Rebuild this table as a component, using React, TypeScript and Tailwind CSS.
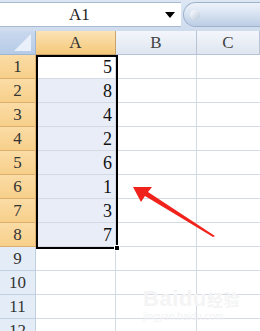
import React from "react";

const values = [5, 8, 4, 2, 6, 1, 3, 7];
const rows = Array.from({ length: 12 }, (_, i) => i + 1);

const serif = { fontFamily: '"Liberation Serif", "DejaVu Serif", serif' };

function ColHeader({ label, active }: { label: string; active?: boolean }) {
  return (
    <div
      className={`h-[24px] flex items-center justify-center border-r border-b text-[17px] ${
        active
          ? "bg-gradient-to-b from-[#fbe3b5] to-[#f5c878] border-[#c8a46a] text-[#333]"
          : "bg-gradient-to-b from-[#f3f6fb] to-[#dfe6f0] border-[#b8c4d6] text-[#444]"
      }`}
    >
      {label}
    </div>
  );
}

export default function App() {
  return (
    <div className="relative w-[260px] h-[331px] overflow-hidden bg-white" style={serif}>
      {/* name box + formula bar */}
      <div className="h-[31px] bg-gradient-to-b from-[#dde7f4] to-[#cfdcee] flex pt-[2px] pb-[4px]">
        <div className="w-[181px] bg-white border-y border-[#a9bbd3] flex items-center relative">
          <span className="absolute left-[69px] text-[17px] text-[#222]">A1</span>
          <span className="absolute left-[165px] top-[9px] w-0 h-0 border-l-[5px] border-r-[5px] border-t-[6px] border-l-transparent border-r-transparent border-t-black" />
        </div>
        <div className="flex-1 ml-[2px] rounded-l-full border border-r-0 border-[#9fb2cc] bg-gradient-to-b from-[#eef3fa] via-[#d6e2f1] to-[#bccde5] flex items-center pl-[6px]">
          <span className="w-[10px] h-[10px] rounded-full bg-gradient-to-br from-white to-[#b9c7da]" />
        </div>
      </div>

      {/* grid */}
      <div className="grid grid-cols-[36px_80px_81px_1fr]">
        <div className="h-[24px] border-r border-b border-[#9eb6d4] bg-gradient-to-b from-[#c9d9ee] to-[#b6cbe6] relative overflow-hidden">
          <svg className="absolute right-[4px] bottom-[3px]" width="17" height="17">
            <polygon points="17,0 17,17 0,17" fill="#e9f0f9" />
          </svg>
        </div>
        <ColHeader label="A" active />
        <ColHeader label="B" />
        <ColHeader label="C" />

        {rows.map((r) => {
          const sel = r <= 8;
          return (
            <React.Fragment key={r}>
              <div
                className={`h-[24px] flex items-center justify-center border-r border-b text-[17px] ${
                  sel
                    ? "bg-gradient-to-b from-[#fbdca5] to-[#f7cf8a] border-[#d9b070] text-[#333]"
                    : "bg-[#e4ecf7] border-[#c2cfe0] text-[#333]"
                }`}
              >
                {r}
              </div>
              <div
                className={`h-[24px] flex items-center justify-end pr-[3px] pt-[1px] border-r border-b border-[#d4dae4] text-[18px] text-[#111] ${
                  sel && r > 1 ? "bg-[#e9edf7]" : "bg-white"
                }`}
              >
                {sel ? values[r - 1] : ""}
              </div>
              <div className="h-[24px] border-r border-b border-[#d4dae4]" />
              <div className="h-[24px] border-b border-[#d4dae4]" />
            </React.Fragment>
          );
        })}
      </div>

      {/* selection outline */}
      <div className="absolute left-[36px] top-[55px] w-[82px] h-[194px] border-2 border-black pointer-events-none" />
      <div className="absolute left-[114px] top-[245px] w-[6px] h-[6px] bg-black border border-white" />

      {/* watermark */}
      <div className="absolute left-[143px] top-[282px] text-[22px] font-bold text-[#f4f4f4] tracking-wide" style={{ fontFamily: '"Liberation Sans", "Noto Sans CJK SC", sans-serif' }}>
        Baidu<span className="text-[16px]">经验</span>
      </div>
      <div className="absolute left-[143px] top-[309px] text-[10px] text-[#f3f3f3]" style={{ fontFamily: '"Liberation Sans", sans-serif' }}>
        jingyan.baidu.com
      </div>

      {/* red arrow */}
      <svg className="absolute left-0 top-0" width="260" height="331">
        <polygon points="133,187 152,187 148,192 215,236 213,237 145,196 141,202" fill="#f0231c" />
      </svg>
    </div>
  );
}
